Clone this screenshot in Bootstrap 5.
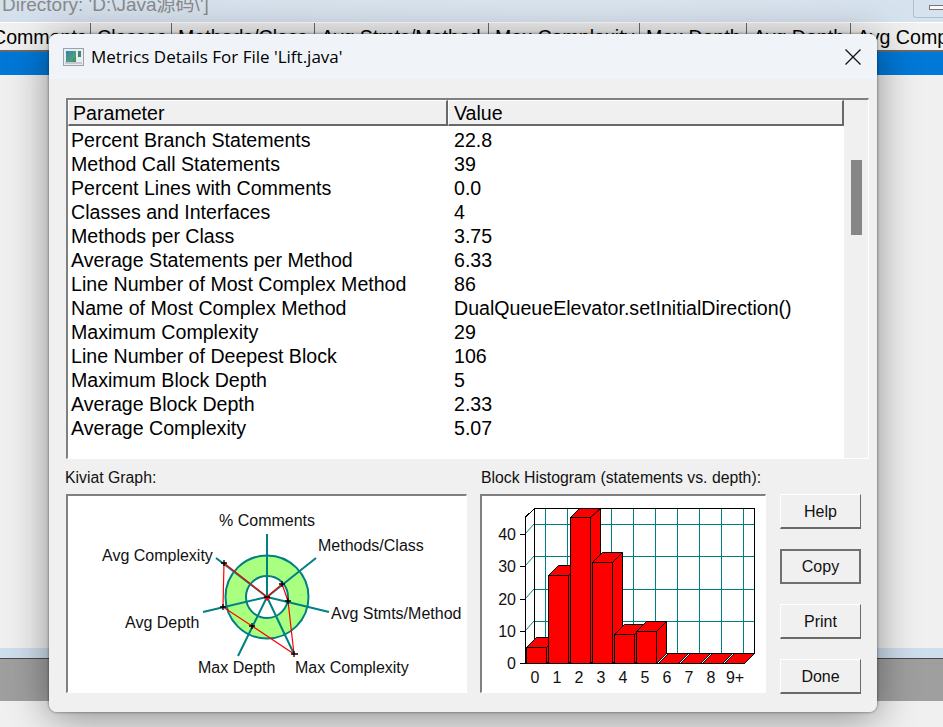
<!DOCTYPE html>
<html lang="en">
<head>
<meta charset="utf-8">
<title>Metrics Details</title>
<link href="https://cdn.jsdelivr.net/npm/bootstrap@5.3.0/dist/css/bootstrap.min.css" rel="stylesheet">
<style>
html,body{margin:0;height:100%;background:#f0f0f0;overflow:hidden}
body{font-family:"Liberation Sans",Arial,"Noto Sans CJK SC",sans-serif;color:#000}
.shell{position:relative;width:943px;height:727px;overflow:hidden;background:#f0f0f0}
.dirbar{height:22px;background:linear-gradient(90deg,#d4e0ec,#dbe5f0 60%,#d6e2ee);overflow:hidden}
.dirtext{font-size:19px;line-height:20px;margin-top:-5px;margin-left:2px;color:#8a8a8a;white-space:nowrap}
.winbtn{width:30px;height:18px;border:1px solid #b4bfca;border-top:0;border-right:0;border-radius:0 0 0 3px;padding:5px 0 0 15px}
.winbtn i{display:block;height:5px;background:#fafafa;border:1px solid #777;border-right:0}
.colhead{height:30px;background:#f0f0f0;border-top:1px solid #fff;border-bottom:2px solid #696969;font-size:19.6px;line-height:28px;white-space:nowrap;overflow:hidden}
.colhead span{flex:none;padding-left:6px;border-right:1px solid #696969;overflow:hidden}
.colhead span:nth-child(1){width:105px;margin-left:-14px}
.colhead span:nth-child(2){width:81px}
.colhead span:nth-child(3){width:143px}
.colhead span:nth-child(4){width:174px}
.colhead span:nth-child(5){width:151px}
.colhead span:nth-child(6){width:107px}
.colhead span:nth-child(7){width:104px}
.colhead span:nth-child(8){width:110px}
.bluerow{height:23px;background:#0078d7}
.midfill{height:573px;background:#f0f0f0}
.paleblue{height:11px;background:#cfdeed;border-bottom:1px solid #4a4a4a}
.grayband{height:42px;background:#9f9f9f}
.dialog{position:absolute;left:49px;top:34px;width:828px;height:678px;border-radius:8px;background:#f0f0f0;overflow:hidden}
.dialog-halo{position:absolute;left:49px;top:34px;width:828px;height:678px;border-radius:8px;box-shadow:0 0 3px rgba(0,0,0,.55),0 6px 42px rgba(0,0,0,.42)}
.dlgtitle{height:45px;background:#f0f4f9;padding:0 16px 0 14px;font-family:"Open Sans","Noto Sans",sans-serif;font-size:17px}
.dlgtitle span{margin-left:7px}
.dlgbody{padding:19px 8px 0 17px}
.listbox{height:361px;border-top:2px solid #808080;border-left:2px solid #808080;border-right:1px solid #fff;border-bottom:1px solid #fff;background:#fff}
.listmain{width:777px}
.listhead{height:26px;font-size:19.6px;line-height:24px;background:#f0f0f0}
.listhead div{border-top:1px solid #fff;border-left:1px solid #fff;border-right:2px solid #696969;border-bottom:2px solid #696969;padding-left:5px}
.listhead .c1{padding-left:4px}
.c1{width:380px;flex:none}
.c2{width:396px;flex:none}
.listrows{padding-top:2px;font-size:19.6px;line-height:24px}
.listrows .c1{padding-left:3px}
.listrows .c2{padding-left:6px}
.scrollcol{background:#f0f0f0;width:24px;padding:60px 6px 0 7px}
.thumb{height:75px;background:#868686}
.lower{margin-top:8px}
.capt{height:27px;padding-top:1px;font-size:15.8px;line-height:20px;white-space:nowrap;margin-left:-1px;color:#111}
.hist .capt{margin-left:1px}
.plotbox{height:199px;border-top:2px solid #808080;border-left:2px solid #808080;border-right:1px solid #fff;border-bottom:1px solid #fff;background:#fff;overflow:hidden}
.plotbox svg{display:block;margin:-2px 0 0 -2px}
.plotbox text{font-family:"Liberation Sans",Arial,sans-serif;font-size:16px;fill:#111}
.kiv{width:401px}
.hist{width:286px;margin-left:13px}
.btncol{margin-left:14px;padding-top:27px;width:81px;row-gap:20px}
.btn.oldbtn{width:81px;height:35px;padding:0;border-radius:0;background:#f0f0f0;color:#111;font-size:16px;line-height:31px;border:1px solid;border-color:#fff #696969 #696969 #fff;border-bottom-width:2px}
.btn.oldbtn.isdefault{border:2px solid #707070;line-height:30px}
</style>
</head>
<body>
<div class="shell">
  <div class="dirbar d-flex justify-content-between">
    <div class="dirtext">Directory: 'D:\Java源码\']</div>
    <div class="winbtn"><i></i></div>
  </div>
  <div class="colhead d-flex">
    <span>Comments</span>
    <span>Classes</span>
    <span>Methods/Class</span>
    <span>Avg Stmts/Method</span>
    <span>Max Complexity</span>
    <span>Max Depth</span>
    <span>Avg Depth</span>
    <span>Avg Comp</span>
  </div>
  <div class="bluerow"></div>
  <div class="midfill"></div>
  <div class="paleblue"></div>
  <div class="grayband"></div>

  <div class="dialog-halo"></div>
  <div class="dialog">
    <div class="dlgtitle d-flex align-items-center">
      <svg width="21" height="18" viewBox="0 0 21 18"><rect x=".5" y=".5" width="20" height="17" fill="#e9edf0" stroke="#9aa3aa"/><defs><linearGradient id="tg" x1="0" y1="0" x2="1" y2="1"><stop offset="0" stop-color="#2f7fb8"/><stop offset=".6" stop-color="#4f9f7a"/><stop offset="1" stop-color="#2f8a6a"/></linearGradient></defs><rect x="3" y="3" width="10" height="12" fill="url(#tg)"/><rect x="15" y="3" width="3" height="6" fill="#3a8a70"/><rect x="2" y="14" width="17" height="2" fill="#c3c9ce"/></svg>
      <span>Metrics Details For File 'Lift.java'</span>
      <svg class="ms-auto" width="16" height="16" viewBox="0 0 16 16"><path d="M.5.5l15 15M15.5.5l-15 15" stroke="#111" stroke-width="1.3" fill="none"/></svg>
    </div>
    <div class="dlgbody">
      <div class="listbox d-flex">
        <div class="listmain">
          <div class="listhead d-flex"><div class="c1">Parameter</div><div class="c2">Value</div></div>
          <div class="listrows">
            <div class="d-flex"><div class="c1">Percent Branch Statements</div><div class="c2">22.8</div></div>
            <div class="d-flex"><div class="c1">Method Call Statements</div><div class="c2">39</div></div>
            <div class="d-flex"><div class="c1">Percent Lines with Comments</div><div class="c2">0.0</div></div>
            <div class="d-flex"><div class="c1">Classes and Interfaces</div><div class="c2">4</div></div>
            <div class="d-flex"><div class="c1">Methods per Class</div><div class="c2">3.75</div></div>
            <div class="d-flex"><div class="c1">Average Statements per Method</div><div class="c2">6.33</div></div>
            <div class="d-flex"><div class="c1">Line Number of Most Complex Method</div><div class="c2">86</div></div>
            <div class="d-flex"><div class="c1">Name of Most Complex Method</div><div class="c2">DualQueueElevator.setInitialDirection()</div></div>
            <div class="d-flex"><div class="c1">Maximum Complexity</div><div class="c2">29</div></div>
            <div class="d-flex"><div class="c1">Line Number of Deepest Block</div><div class="c2">106</div></div>
            <div class="d-flex"><div class="c1">Maximum Block Depth</div><div class="c2">5</div></div>
            <div class="d-flex"><div class="c1">Average Block Depth</div><div class="c2">2.33</div></div>
            <div class="d-flex"><div class="c1">Average Complexity</div><div class="c2">5.07</div></div>
          </div>
        </div>
        <div class="scrollcol"><div class="thumb"></div></div>
      </div>
      <div class="lower d-flex">
        <div class="kiv">
          <div class="capt">Kiviat Graph:</div>
          <div class="plotbox">
            <svg width="401" height="199" viewBox="66 494 401 199">
              <circle cx="267" cy="597" r="41.5" fill="#a8ff80" stroke="#008080" stroke-width="2"/>
              <circle cx="267" cy="597" r="21" fill="#fff" stroke="#008080" stroke-width="2"/>
              <g stroke="#008080" stroke-width="2" fill="none">
                <path d="M267 597V534M267 597L316 558M267 597L329 612M267 597L294 654M267 597L238 656M267 597L203 612M267 597L216 558"/>
              </g>
              <path d="M267 597L282 584L288 601L294 654L252 626L223 607L224 563Z" fill="none" stroke="#f00" stroke-width="1.2"/>
              <path d="M263 597h8l-4 4z" fill="#f00"/>
              <g stroke="#000" stroke-width="1.3" fill="none">
                <path d="M279 584h6M282 581v6M285 601h6M288 598v6M291 654h7M294 651v6M249 626h6M252 623v6M220 607h6M223 604v6M221 563h6M224 560v6M264 597h6"/>
              </g>
              <text x="219" y="526">% Comments</text>
              <text x="318" y="551">Methods/Class</text>
              <text x="102" y="561">Avg Complexity</text>
              <text x="331" y="619">Avg Stmts/Method</text>
              <text x="125" y="628">Avg Depth</text>
              <text x="198" y="673">Max Depth</text>
              <text x="295" y="673">Max Complexity</text>
            </svg>
          </div>
        </div>
        <div class="hist">
          <div class="capt">Block Histogram (statements vs. depth):</div>
          <div class="plotbox">
            <svg width="286" height="199" viewBox="480 494 286 199">
              <g stroke="#008080" stroke-width="1" fill="none" shape-rendering="crispEdges">
                <path d="M545 508V653M567 508V653M589 508V653M611 508V653M633 508V653M655 508V653M677 508V653M699 508V653M721 508V653M743 508V653"/>
                <path d="M534 524H754M534 556H754M534 589H754M534 621H754"/>
              </g>
              <g stroke="#008080" stroke-width="1" fill="none"><path d="M525 534L534 524M525 566L534 556M525 599L534 589M525 631L534 621"/></g>
              <g stroke="#000" stroke-width="1" fill="none">
                <path d="M525.5 517L534.5 508.5H754.5V653.5L744 663.5H525.5V517M534.5 508.5V653.5H754.5M520 534.5h5M520 566.5h5M520 599.5h5M520 631.5h5M520 663.5h5" shape-rendering="crispEdges"/>
              </g>
              <g fill="#f00" stroke="#000" stroke-width="1">
                <path d="M526.5 647.5L536.5 637.5H556.5L546.5 647.5Z"/>
                <path d="M546.5 647.5L556.5 637.5V653.5L546.5 663.5Z"/>
                <rect x="526.5" y="647.5" width="20" height="16"/>
                <path d="M548.5 575.5L558.5 565.5H578.5L568.5 575.5Z"/>
                <path d="M568.5 575.5L578.5 565.5V653.5L568.5 663.5Z"/>
                <rect x="548.5" y="575.5" width="20" height="88"/>
                <path d="M570.5 517.5L579.5 508.5H600.5L590.5 517.5Z"/>
                <path d="M590.5 517.5L600.5 508.5V653.5L590.5 663.5Z"/>
                <rect x="570.5" y="517.5" width="20" height="146"/>
                <path d="M592.5 562.5L602.5 552.5H622.5L612.5 562.5Z"/>
                <path d="M612.5 562.5L622.5 552.5V653.5L612.5 663.5Z"/>
                <rect x="592.5" y="562.5" width="20" height="101"/>
                <path d="M614.5 634.5L624.5 624.5H644.5L634.5 634.5Z"/>
                <path d="M634.5 634.5L644.5 624.5V653.5L634.5 663.5Z"/>
                <rect x="614.5" y="634.5" width="20" height="29"/>
                <path d="M636.5 631.5L646.5 621.5H666.5L656.5 631.5Z"/>
                <path d="M656.5 631.5L666.5 621.5V653.5L656.5 663.5Z"/>
                <rect x="636.5" y="631.5" width="20" height="32"/>
                <path d="M658.5 663.5l10-10h20l-10 10zM680.5 663.5l10-10h20l-10 10zM702.5 663.5l10-10h20l-10 10zM724.5 663.5l10-10h20l-10 10z"/>
              </g>
              <g text-anchor="end">
                <text x="516" y="540">40</text><text x="516" y="572">30</text><text x="516" y="605">20</text><text x="516" y="637">10</text><text x="516" y="669">0</text>
              </g>
              <g text-anchor="middle">
                <text x="535" y="683">0</text><text x="557" y="683">1</text><text x="579" y="683">2</text><text x="601" y="683">3</text><text x="623" y="683">4</text><text x="645" y="683">5</text><text x="667" y="683">6</text><text x="689" y="683">7</text><text x="711" y="683">8</text><text x="735" y="683">9+</text>
              </g>
            </svg>
          </div>
        </div>
        <div class="btncol d-flex flex-column">
          <button type="button" class="btn oldbtn">Help</button>
          <button type="button" class="btn oldbtn isdefault">Copy</button>
          <button type="button" class="btn oldbtn">Print</button>
          <button type="button" class="btn oldbtn">Done</button>
        </div>
      </div>
    </div>
  </div>
</div>
</body>
</html>
